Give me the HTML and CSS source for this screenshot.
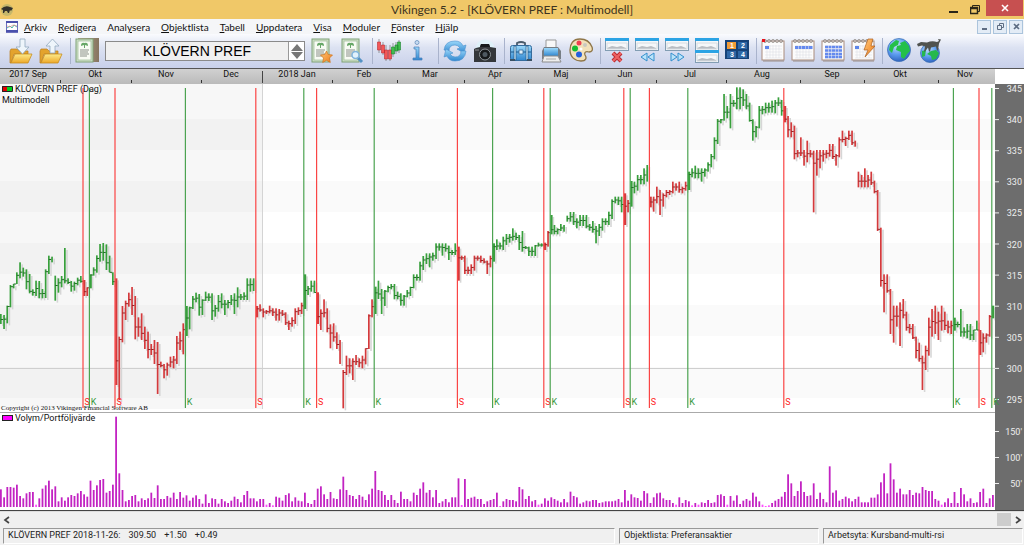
FILE: index.html
```html
<!DOCTYPE html>
<html lang="sv">
<head>
    <meta charset="UTF-8">
    <meta name="viewport" content="width=device-width, initial-scale=1.0">
    <title>Vikingen 5.2 - [KLÖVERN PREF : Multimodell]</title>
    <link rel="stylesheet" href="styles.css">
</head>
<body>
    <svg class="defs" aria-hidden="true">
        <defs>
            <linearGradient id="blue" x1="0" y1="0" x2="0" y2="1"><stop offset="0" stop-color="#9bd8fa"/><stop offset="1" stop-color="#2f86cf"/></linearGradient>
            <linearGradient id="gold" x1="0" y1="0" x2="0" y2="1"><stop offset="0" stop-color="#fdeb8c"/><stop offset="1" stop-color="#eda827"/></linearGradient>
            <linearGradient id="wood" x1="0" y1="0" x2="1" y2="0"><stop offset="0" stop-color="#b9a68e"/><stop offset="1" stop-color="#85745f"/></linearGradient>
            <linearGradient id="orange" x1="0" y1="0" x2="1" y2="1"><stop offset="0" stop-color="#ffc879"/><stop offset="1" stop-color="#ee7a17"/></linearGradient>
            <radialGradient id="sea" cx=".4" cy=".3" r=".8"><stop offset="0" stop-color="#c4e2ff"/><stop offset=".5" stop-color="#5b9cee"/><stop offset="1" stop-color="#2353b4"/></radialGradient>
            <linearGradient id="ruler" x1="0" y1="0" x2="0" y2="1"><stop offset="0" stop-color="#d2d2d2"/><stop offset="1" stop-color="#bababa"/></linearGradient>
            <g id="folder">
                <path d="M1 13l1-2h6l2 2h9v3H5l-3 9H1z" fill="#e3a32d" stroke="#ba7d1e" stroke-width=".7"/>
                <path d="M2 25l4-9h17l-4 9z" fill="url(#gold)" stroke="#c68d22" stroke-width=".8"/>
            </g>
            <g id="sheet">
                <rect x="1" y="1" width="17" height="23" fill="#cfe0c8" stroke="#7fa277"/>
                <rect x="3" y="3" width="13" height="19" fill="#f8fbf4" stroke="#9cba94" stroke-width=".7"/>
                <path d="M6 8q0-4 3.500-3 3.500-1 3.500 3l-3-1v3h-1V7z" fill="#67a767"/>
                <path d="M5 12h9M5 14h8M5 16h9M5 18h7" stroke="#8b918a"/>
            </g>
            <g id="window">
                <rect x=".5" y=".5" width="23" height="12" fill="#f5f7f9" stroke="#829db3"/>
                <rect x="0" y="0" width="24" height="3" fill="#2ba3e4"/>
                <path d="M2 10l5-2 5 1 4-1 5 2v1H2z" fill="#b8bcc2"/>
                <path d="M2 5h20v6H2z" fill="none" stroke="#d7dce1"/>
            </g>
            <g id="calendar">
                <rect x="1" y="3" width="22" height="19" fill="#fcfcfc" stroke="#aa8c7d"/>
                <path d="M2 23h21" stroke="#998b86"/>
                <path d="M4 8h17M4 11h17M4 14h17M4 17h17M4 20h17M6 7v13M9 7v13M12 7v13M15 7v13M18 7v13" stroke="#dedfe5" stroke-width=".6"/>
                <g fill="none" stroke="#8c8580" stroke-width=".8"><circle cx="4" cy="3" r="1.500"/><circle cx="8" cy="3" r="1.500"/><circle cx="12" cy="3" r="1.500"/><circle cx="16" cy="3" r="1.500"/><circle cx="20" cy="3" r="1.500"/></g>
            </g>
        </defs>
    </svg>

    <header class="titlebar">
        <svg class="app-icon" viewBox="0 0 14 14"><circle cx="7" cy="7" r="6" fill="#c6b76a"/><path d="M1 6q4-4 9-2l3 1-2 3-1-1-1 3H8L7 8H5l-1 2H3V7z" fill="#33312b"/></svg>
        <h1>Vikingen 5.2 - [KLÖVERN PREF : Multimodell]</h1>
        <div class="window-buttons">
            <button type="button" aria-label="Minimera"><svg width="9" height="15" viewBox="0 0 9 15"><path d="M0 11h9" stroke="#2b2618" stroke-width="2"/></svg></button>
            <button type="button" aria-label="Återställ"><svg width="10" height="15" viewBox="0 0 10 15"><path d="M2.500 6V4.500h7v6H8" fill="none" stroke="#2b2618"/><path d="M.5 6.500h7v6h-7zM0 7.500h8" fill="none" stroke="#2b2618" stroke-width="1.500"/></svg></button>
            <button type="button" class="close" aria-label="Stäng"><svg width="8" height="8" viewBox="0 0 8 8"><path d="M1 1l6 6M7 1L1 7" stroke="#fff" stroke-width="1.600"/></svg></button>
        </div>
    </header>

    <nav class="menubar">
        <svg class="doc-icon" viewBox="0 0 12 12"><rect x=".5" y=".5" width="11" height="11" fill="#fff" stroke="#6c70bd"/><path d="M0 1h12M0 10h12" stroke="#4a51ac" stroke-width="2"/><path d="M1 7l3-2 2 2 2-3 3 2" fill="none" stroke="#48b7a8"/><path d="M1 5l3 1 3-2 4 1" fill="none" stroke="#e09090" stroke-width=".7"/></svg>
        <a href="#"><u>A</u>rkiv</a>
        <a href="#"><u>R</u>edigera</a>
        <a href="#">Anal<u>y</u>sera</a>
        <a href="#"><u>O</u>bjektlista</a>
        <a href="#"><u>T</u>abell</a>
        <a href="#"><u>U</u>ppdatera</a>
        <a href="#"><u>V</u>isa</a>
        <a href="#"><u>M</u>oduler</a>
        <a href="#"><u>F</u>önster</a>
        <a href="#"><u>H</u>jälp</a>
        <div class="mdi-buttons">
            <button type="button" aria-label="Minimera fönster"><svg viewBox="0 0 11 11"><path d="M3 8h5" stroke="#5d6c82" stroke-width="2"/></svg></button>
            <button type="button" aria-label="Återställ fönster"><svg viewBox="0 0 11 11"><path d="M4.500 4V2.500h4v4H7M2.500 4.500h4v4h-4z" fill="none" stroke="#5d6c82"/></svg></button>
            <button type="button" aria-label="Stäng fönster"><svg viewBox="0 0 11 11"><path d="M3 3l5 5M8 3L3 8" stroke="#5d6c82" stroke-width="1.600"/></svg></button>
        </div>
    </nav>

    <div class="toolbar">
        <button type="button" aria-label="Hämta"><svg viewBox="0 0 24 26"><use href="#folder"/><path d="M11 1h5v8h4l-6.500 7L7 9h4z" fill="#eef5fb" stroke="#93a9bf" stroke-width=".8"/></svg></button>
        <button type="button" aria-label="Spara"><svg viewBox="0 0 24 26"><use href="#folder"/><path d="M11 15h5V8h4l-6.500-7L7 8h4z" fill="#eef5fb" stroke="#93a9bf" stroke-width=".8"/></svg></button>
        <span class="separator"></span>
        <button type="button" aria-label="Objektlista"><svg viewBox="0 0 24 26"><path d="M3 0h21v24H3z" fill="url(#wood)"/><use href="#sheet"/></svg></button>
        <div class="object-picker">
            <input type="text" aria-label="Objekt" value="KLÖVERN PREF">
            <div class="spinner">
                <button type="button" aria-label="Föregående"><svg viewBox="0 0 14 8"><path d="M7 1l6 7H1z" fill="#777"/></svg></button>
                <button type="button" aria-label="Nästa"><svg viewBox="0 0 14 8"><path d="M7 7l6-7H1z" fill="#777"/></svg></button>
            </div>
        </div>
        <button type="button" aria-label="Favoriter"><svg viewBox="0 0 24 26"><use href="#sheet"/><path d="M15.500 13l1.700 3.500 4.300.5-3 3 .8 4.500-3.800-2.200-3.800 2.200.8-4.500-3-3 4.300-.5z" fill="url(#orange)" stroke="#cf761f" stroke-width=".7"/></svg></button>
        <button type="button" aria-label="Sök objekt"><svg viewBox="0 0 24 26"><use href="#sheet"/><path d="M17 20l4 4" stroke="#5492c5" stroke-width="3"/><circle cx="14.500" cy="17" r="3.500" fill="#e1f2fc" stroke="#80b4dc" stroke-width="1.500"/></svg></button>
        <span class="separator"></span>
        <button type="button" aria-label="Diagram"><svg viewBox="0 0 24 26"><path d="M2 1v14M6 4v13M9 7v16M13 7v16M16 5v14M19 4v12M22 2v13" stroke="#777" stroke-width=".7"/><path d="M.5 4h3v8h-3zM4.500 7h3v8h-3zM7.500 12h3v9h-3zM11.500 12h3v9h-3z" fill="#f35757" stroke="#b92c32" stroke-width=".6"/><path d="M14.500 9h3v7h-3zM18 7h3v6h-3zM20.500 4h3v8h-3z" fill="#40bd4c" stroke="#1d8330" stroke-width=".6"/></svg></button>
        <button type="button" aria-label="Information"><svg viewBox="0 0 24 26"><circle cx="10" cy="4.500" r="2" fill="#c8dcf2" stroke="#668fbd" stroke-width=".8"/><path d="M7 9h5v11h3v2H6v-2h3v-9H7z" fill="url(#blue)" stroke="#477bb8" stroke-width=".7"/></svg></button>
        <span class="separator"></span>
        <button type="button" aria-label="Uppdatera"><svg viewBox="0 0 24 26"><path d="M1 12Q2 3 12 3q6 0 8 5l3-1-2 8-7-4 3-1q-2-3-5-3-6 0-6 6z" fill="url(#blue)" stroke="#4b90cf" stroke-width=".6"/><path d="M23 13q-1 10-11 10-6 0-8-5l-3 1 2-8 7 4-3 1q2 3 5 3 6 0 6-6z" fill="url(#blue)" stroke="#4b90cf" stroke-width=".6"/></svg></button>
        <button type="button" aria-label="Ögonblicksbild"><svg viewBox="0 0 24 26"><circle cx="12" cy="11" r="9.500" fill="#dff1f9"/><path d="M1 11l2-1 4-1 1-3h8l1 3 6 1v14H1z" fill="#34373b"/><path d="M8 6h8l1 3H7z" fill="#16191c"/><circle cx="12" cy="16.500" r="5.500" fill="#17191b" stroke="#8d9498"/><circle cx="12" cy="16.500" r="2.500" fill="#4f5961"/><path d="M2 12h4" stroke="#8b8e91"/></svg></button>
        <span class="separator"></span>
        <button type="button" aria-label="Portfölj"><svg viewBox="0 0 24 26"><path d="M8 8V5q4-2 8 0v3" fill="none" stroke="#495a6a" stroke-width="1.800"/><rect x="1.500" y="7.500" width="21" height="15" rx="2" fill="url(#blue)" stroke="#356c9d"/><path d="M2 14h20" stroke="#215a8b"/><path d="M5 8h2v14H5zM17 8h2v14h-2z" fill="#cfe8f6" stroke="#215a8b" stroke-width=".7"/><path d="M10 12h4v4h-4z" fill="#e2f1fa" stroke="#356c9d" stroke-width=".8"/><path d="M1 21h5v2H1zM18 21h5v2h-5z" fill="#395064"/></svg></button>
        <button type="button" aria-label="Skriv ut"><svg viewBox="0 0 24 26"><path d="M7 11V2h10v9" fill="#f8f8f8" stroke="#999"/><path d="M3 13l2-4h14l3 4v8H3z" fill="#777e85"/><path d="M5 10h14v8H5z" fill="url(#blue)"/><path d="M5 18h14l3 6H3z" fill="#ededed" stroke="#8b8b8b"/><path d="M7 21h10" stroke="#aaa"/></svg></button>
        <button type="button" aria-label="Färger"><svg viewBox="0 0 24 26"><path d="M11 1C4 1 1 6 1 12c0 7 5 11 11 11 5 0 6-3 4-6-1-3 1-4 4-3 3 0 4-2 3-5-2-5-6-8-12-8z" fill="#f2e1ba" stroke="#8e7548" stroke-width="1.300"/><circle cx="10" cy="5" r="2.500" fill="#ed4050"/><circle cx="6" cy="10.500" r="3" fill="#14be32"/><circle cx="10" cy="16.500" r="3" fill="#2460dd"/><circle cx="16" cy="7" r="2" fill="#c9c8c0"/><circle cx="12" cy="11" r="1.500" fill="#fff"/></svg></button>
        <span class="separator"></span>
        <button type="button" aria-label="Stäng diagram"><svg viewBox="0 0 24 26"><use href="#window"/><path d="M8 15l8 8M16 15l-8 8" stroke="#b8262b" stroke-width="4"/><path d="M8 15l8 8M16 15l-8 8" stroke="#ed6262" stroke-width="2.400"/></svg></button>
        <button type="button" aria-label="Bakåt"><svg viewBox="0 0 24 26"><use href="#window"/><path d="M12 15v8l-6-4zM19 15v8l-6-4z" fill="#b9e4fa" stroke="#338fcd"/></svg></button>
        <button type="button" aria-label="Framåt"><svg viewBox="0 0 24 26"><use href="#window"/><path d="M6 15v8l6-4zM13 15v8l6-4z" fill="#b9e4fa" stroke="#338fcd"/></svg></button>
        <button type="button" aria-label="Två diagram"><svg viewBox="0 0 24 26"><use href="#window"/><use href="#window" y="12"/></svg></button>
        <button type="button" aria-label="Fyra diagram"><svg viewBox="0 0 24 26"><rect y="2" width="24" height="19" fill="#164278"/><path d="M2 4h9v7H2z" fill="#f19b37"/><path d="M13 4h9v7h-9zM2 13h9v7H2zM13 13h9v7h-9z" fill="#2e67a6"/><g class="tile-number"><text x="7" y="10">1</text><text x="18" y="10">2</text><text x="7" y="19">3</text><text x="18" y="19">4</text></g></svg></button>
        <span class="separator"></span>
        <button type="button" aria-label="Dag"><svg viewBox="0 0 24 26"><use href="#calendar"/><path d="M1 1h3v3H1z" fill="#e9141b"/><path d="M4 8h4v3H4z" fill="#5d85e8"/></svg></button>
        <button type="button" aria-label="Vecka"><svg viewBox="0 0 24 26"><use href="#calendar"/><path d="M4 9.500h18" stroke="#6489ee" stroke-width="3" stroke-dasharray="3 .5"/></svg></button>
        <button type="button" aria-label="Månad"><svg viewBox="0 0 24 26"><use href="#calendar"/><path d="M4 9h17M4 12.500h17M4 16h17M4 19h17" stroke="#6489ee" stroke-width="2.500" stroke-dasharray="3 .5"/></svg></button>
        <button type="button" aria-label="Intradag"><svg viewBox="0 0 24 26"><use href="#calendar"/><path d="M4 8h4v3H4z" fill="#5d85e8"/><path d="M17 1h5l-2 7h4L14 19l3-7h-4z" fill="url(#orange)" stroke="#ad6020" stroke-width=".7"/></svg></button>
        <span class="separator"></span>
        <button type="button" aria-label="Internet"><svg viewBox="2 0 24 26"><circle cx="14" cy="12" r="11.500" fill="url(#sea)" stroke="#376cb0" stroke-width=".7"/><path d="M5 7l6-5 3 1-1 4-4 2-2 6-3-3zM15 5l5-2 4 5 1 5-3 3-3 5-3-2v-5l-5-2 1-4 4-1z" fill="#24c04a"/></svg></button>
        <button type="button" aria-label="Börsen"><svg viewBox="0 0 24 26"><circle cx="13" cy="15" r="9.500" fill="url(#sea)" stroke="#376cb0" stroke-width=".7"/><path d="M14 13l5-1 3 3-3 6-4 1-1-4-4-2zM5 13l4-1-1 6-3 1z" fill="#26b84d"/><path d="M0 6l4-2 6 .5q5-2 10-.5l2-1-1-2 3 .5-2 4-1 7h-1l-1-4-5 1-1 4h-1l-1-4-3 4h-1l1-5-3-1-4 1z" fill="#505350"/></svg></button>
    </div>

    <main class="chart">
        <svg id="timeline" viewBox="0 0 1024 16"></svg>
        <svg id="price" viewBox="0 0 1024 328"></svg>
        <svg id="volume" viewBox="0 0 1024 100"></svg>
    </main>

    <div class="scrollbar">
        <button type="button" aria-label="Rulla vänster"><svg viewBox="0 0 7 8"><path d="M6 1L2 4l4 3" fill="none" stroke="#444" stroke-width="1.700"/></svg></button>
        <div class="track"><span class="thumb"></span></div>
        <button type="button" aria-label="Rulla höger"><svg viewBox="0 0 7 8"><path d="M1 1l4 3-4 3" fill="none" stroke="#444" stroke-width="1.700"/></svg></button>
    </div>

    <footer class="statusbar">
        <div class="pane quote"><span>KLÖVERN PREF 2018-11-26:</span><span>309.50</span><span>+1.50</span><span>+0.49</span></div>
        <div class="pane">Objektlista: Preferansaktier</div>
        <div class="pane">Arbetsyta: Kursband-multi-rsi</div>
    </footer>
    <script src="chart.js"></script>
</body>
</html>
```

FILE: styles.css
```css
* {
    box-sizing: border-box;
}
body {
    margin: 0;
    font-family: Roboto, "Liberation Sans", sans-serif;
    font-size: 9px;
    color: #222;
    background-color: #f0f0f0;
}
button {
    display: flex;
    align-items: center;
    justify-content: center;
    padding: 0;
    border: 0;
    background: none;
}
svg {
    display: block;
}
.defs {
    position: absolute;
    width: 0;
    height: 0;
}

.titlebar {
    display: grid;
    grid-template-columns: 1fr auto 1fr;
    align-items: center;
    height: 19px;
    background-color: #f0c868;
}
.titlebar h1 {
    margin: 0;
    font: 12px/19px Lato, sans-serif;
    color: #3d3420;
}
.app-icon {
    width: 14px;
    height: 14px;
}
.window-buttons {
    display: flex;
    align-self: start;
    justify-content: flex-end;
    gap: 12px;
    padding-right: 1px;
}
.window-buttons .close {
    width: 37px;
    height: 16px;
    margin-left: -6px;
    background-color: #c75050;
}

.menubar {
    display: flex;
    align-items: center;
    gap: 11px;
    height: 15px;
    padding-left: 6px;
    background-color: #f5f6f8;
    font: 10px/14px Lato, sans-serif;
}
.menubar a {
    color: #111;
    text-decoration: none;
}
.doc-icon {
    width: 12px;
    height: 12px;
    margin-right: -5px;
}
.mdi-buttons {
    display: flex;
    gap: 2px;
    margin-left: auto;
    padding-right: 1px;
}
.mdi-buttons button {
    width: 14px;
    height: 14px;
    border: 1px solid #abc4dc;
    background-color: #e3ecf6;
}
.mdi-buttons svg {
    width: 11px;
}

.toolbar {
    display: flex;
    align-items: center;
    gap: 6px;
    height: 34px;
    padding-left: 9px;
    background: linear-gradient(#fafbfe, #dce2f2 40%, #c8d0ea);
}
.toolbar > button {
    width: 24px;
    height: 26px;
}
.toolbar > button svg {
    width: 24px;
    height: 26px;
}
.separator {
    width: 1px;
    height: 26px;
    margin: 0 -2px 0 1px;
    background-color: #a9b3cc;
}
.tile-number {
    fill: #fff;
    font-size: 7px;
    font-weight: bold;
    text-anchor: middle;
}
.object-picker {
    display: flex;
    width: 200px;
    height: 20px;
    border: 1px solid #8a8a8a;
    background-color: #f0f0f0;
}
.object-picker input {
    flex: 1;
    min-width: 0;
    padding: 0;
    border: 0;
    background: none;
    font: 14px "Liberation Sans", sans-serif;
    text-align: center;
    color: #000;
}
.spinner {
    display: grid;
    width: 16px;
    border-left: 1px solid #999;
    background-color: #fff;
}
.spinner svg {
    width: 14px;
}

.chart svg {
    width: 100%;
    height: auto;
}
.chart text {
    fill: #111;
    font-size: 9px;
}
.chart .scale {
    fill: #eee;
    text-anchor: end;
}
.chart .month {
    text-anchor: middle;
}
.chart .copyright {
    font: 7px "Liberation Serif", serif;
}
.chart .sell {
    fill: #f22;
}
.chart .buy {
    fill: #38983b;
}

.scrollbar {
    display: flex;
    height: 15px;
    background-color: #f0f0f0;
}
.scrollbar button {
    width: 12px;
}
.scrollbar svg {
    width: 7px;
}
.track {
    display: flex;
    flex: 1;
    justify-content: flex-end;
    padding: 1px 0;
}
.thumb {
    width: 14px;
    margin-right: 1px;
    background-color: #cdcdcd;
}

.statusbar {
    display: grid;
    grid-template-columns: 612fr 200fr 200fr;
    gap: 4px;
    padding: 1px 1px 0 3px;
}
.pane {
    height: 16px;
    padding-left: 4px;
    border: 1px solid #fff;
    border-top-color: #999;
    border-left-color: #999;
    line-height: 13px;
    white-space: nowrap;
}
.quote span {
    margin-right: 8px;
}
```

FILE: chart.js
```javascript
// [high, low] pairs, in thirds of a unit below the top of each run
const runs = [
    { top: 146, bars: [
        [252,282],[255,297],[227,280],[165,232],[162,175],[127,162],[97,145],[113,140],[118,178],[132,190],
        [178,197],[152,198],[153,205],[177,205],[118,204],[77,132],[80,97],[137,212],[145,188],[138,172],
        [54,160],[145,162],[153,185],[155,182],[143,166],[138,158],[150,198],[172,198],[133,175],[112,137],
        [76,128],[42,95],[39,92],[43,120],[77,127],[127,165],[145,465],[320,510],[228,337],[212,270],
        [188,230],[171,255],[198,328],[262,320],[250,330],[290,357],[305,385],[342,375],[330,402],[336,492],
        [395,412],[402,445],[398,437],[380,412],[378,415],[318,402],[305,360],[280,373],[228,318],[230,298],
        [198,237],[188,217],[192,257],[208,255],[185,213],[190,213],[190,270],[225,260],[195,245],[190,235],
        [210,255],[210,235],[195,225],[190,252],[172,232],[192,210],[187,210],[145,210],[145,185],[145,183],
        [228,262],[223,245],[235,262],[240,252],[227,250],[235,258],[235,272],[237,272],[240,258],[247,285],
        [272,300],[262,290],[235,282],[232,255],[218,252],[133,237],[168,195],[152,185],[152,188],[187,282],
        [238,300],[208,262],[235,307],[283,355],[280,335],[307,357],[330,402],[420,535],[377,435],[385,430],
        [385,450],[375,405],[385,412],[377,415],[355,403],[253,357],[208,262],[170,252],[152,207],[177,252],
        [180,228],[167,187],[162,178],[162,208],[185,208],[190,227],[195,227],[180,202],[170,198],[133,175],
        [133,152],[95,152],[78,120],[70,102],[70,112],[68,92],[40,87],[40,62],[40,77],[40,65],
        [47,90],[60,75],[40,75],[50,152],[77,90],[77,132],[110,132],[103,132],[77,122],[77,92],
        [77,98],[85,100],[92,132],[77,112]
    ] },
    { top: 66, bars: [
        [280,335],[268,300],[278,298],[260,300],[252,285],[252,278],[235,272],[248,270],[255,300],[243,305],
        [288,297],[290,318],[290,318],[285,318],[278,290],[280,290],[278,300],[243,290],[195,253],[225,253],
        [235,253],[222,243],[225,245],[197,215],[186,215],[186,225],[205,235],[195,228],[195,228],[195,235],
        [222,242],[213,248],[228,280],[222,258],[205,242],[205,225],[185,225],[148,207],[140,160],[140,165],
        [140,187],[130,225],[150,187],[93,170],[95,130],[75,122],[75,103],[55,103],[45,95],[140,172],
        [140,185],[110,160],[120,195],[130,170],[120,142],[120,135],[95,130],[100,122],[95,128],[110,130],
        [95,122]
    ] },
    { top: -4, bars: [
        [275,330],[265,292],[257,295],[265,295],[265,305],[265,290],[247,275],[222,262],[172,238],[117,192],
        [117,130],[42,122],[78,115],[42,145],[60,80],[22,88],[22,88],[28,78],[42,88],[68,125],
        [118,182],[138,172],[78,145],[78,103],[68,100],[68,98],[62,98],[60,100],[52,78],[60,107],
        [78,127],[108,172],[127,172],[137,238],[210,232],[172,228],[210,257],[182,247],[210,232],[212,397],
        [210,287],[210,265],[210,245],[210,235],[192,230],[192,237],[222,257],[172,232],[152,187],[170,198],
        [152,180],[152,195],[182,200]
    ] },
    { top: 36, bars: [
        [155,202],[165,202],[145,202],[165,202],[155,195],[182,220],[210,333],[323,500],[463,577],[463,518],
        [507,642],[557,668],[557,620],[547,678],[537,595],[575,632],[612,640],[612,657],[650,715],[668,725],
        [707,810],[677,750],[593,707],[567,650],[557,642],[575,660],[557,632],[575,630],[602,640],[602,642],
        [593,632],[605,622],[567,650],[622,650],[612,655],[612,660],[630,660],[602,630],[630,705],[640,697],
        [640,668],[585,650],[557,595]
    ] }
];

// bar number where the model turns: S = sell, K = buy
const signals = [
    [26,'S'],[28,'K'],[36,'S'],[58,'K'],[80,'S'],[95,'K'],[99,'S'],[117,'K'],[143,'S'],[154,'K'],
    [170,'S'],[172,'K'],[195,'S'],[197,'K'],[203,'S'],[215,'K'],[245,'S'],[298,'K'],[306,'S'],[310,'K']
];

const volumes = [
    53,29,60,60,58,67,33,26,41,45,45,7,26,55,65,79,53,62,17,29,19,29,36,33,41,48,38,31,79,51,
    65,81,84,43,48,67,271,101,51,17,21,33,36,17,26,21,26,43,27,65,24,24,33,28,43,24,45,28,35,19,
    28,35,24,10,38,12,26,24,10,24,17,12,19,31,24,14,36,48,26,26,17,24,24,7,12,5,31,28,19,36,
    41,17,29,19,17,43,12,9,21,55,62,38,24,45,26,24,53,91,51,36,33,24,36,31,21,38,55,108,51,48,
    36,21,36,21,12,46,24,24,17,43,36,55,74,43,51,29,51,12,17,24,14,29,29,86,6,84,24,28,31,24,
    24,9,17,21,24,43,3,17,24,21,21,17,60,53,24,33,17,21,7,10,26,19,29,24,19,14,24,14,46,33,
    29,10,14,19,17,21,21,12,14,17,17,17,19,24,14,51,19,38,29,27,19,48,41,12,29,41,43,26,21,21,
    12,7,29,12,21,17,5,12,7,14,12,21,12,14,36,38,33,7,33,19,35,9,19,24,19,43,31,17,7,3,
    5,12,19,24,31,45,98,71,33,48,77,45,33,35,71,24,43,24,14,122,43,50,19,24,31,26,17,24,31,14,
    14,14,28,28,38,74,101,41,131,83,43,55,38,38,51,36,43,41,60,51,48,48,24,19,7,14,26,12,45,12,
    57,38,17,26,12,14,45,55,12,26,36
];

const months = [
    ['2017 Sep',28],['Okt',95],['Nov',166],['Dec',231],['2018 Jan',297],['Feb',364],['Mar',430],['Apr',495],
    ['Maj',561],['Jun',625],['Jul',690],['Aug',762],['Sep',832],['Okt',900],['Nov',965]
];
const monthTicks = [60,131,201,332,397,464,528,595,656,726,800,864,938];

const plotWidth = 995;
const barX = i => 0.8 + i * 3.2;
const rect = (x, y, w, h, fill) => `<rect x="${x}" y="${y}" width="${w}" height="${h}" fill="${fill}"/>`;
const text = (x, y, cls, str) => `<text x="${x}" y="${y}" class="${cls}">${str}</text>`;

function drawTimeline() {
    let out = rect(0, 0, plotWidth, 16, 'url(#ruler)') + rect(0, 0, 1024, 1, '#555') + rect(plotWidth, 1, 29, 15, '#fff');
    months.forEach(([name, x]) => out += text(x, 9, 'month', name));
    monthTicks.forEach(x => out += rect(x, 12, 1, 3, '#333'));
    out += rect(262, 3, 1, 12, '#444');
    document.getElementById('timeline').innerHTML = out;
}

function drawPrice() {
    const bars = runs.flatMap(run => run.bars.map(([h, l]) => [run.top + h / 3, run.top + l / 3]));
    let out = rect(0, 0, plotWidth, 328, '#fff');
    for (let y = 35; y < 328; y += 62) {
        out += rect(0, y, plotWidth, 31, '#fafafa');
    }
    out += rect(0, 0, 262, 325, 'rgba(0,0,0,0.03)') + rect(262, 0, 1, 325, '#d4d4d4');
    out += rect(0, 284, plotWidth, 1, '#cfcfcf');

    let side = 'K';
    let shadows = '';
    let sticks = '';
    bars.forEach(([high, low], i) => {
        const turn = signals.find(s => s[0] === i);
        if (turn) side = turn[1];
        const x = barX(i);
        const color = side === 'K' ? '#38a03c' : '#d43a3c';
        const dark = side === 'K' ? '#256f29' : '#982426';
        shadows += rect(x + 1.4, high + 2, 1.6, low - high, '#d6d6d6');
        sticks += rect(x - 0.8, high, turn ? 2.2 : 1.7, low - high, color);
        const next = bars[i + 1];
        if (next) {
            const close = (Math.max(high, next[0]) + Math.min(low, next[1])) / 2;
            if (close >= high && close <= low) sticks += rect(x, close - 0.5, 2.6, 1, dark);
        }
    });
    out += shadows + sticks;

    out += rect(plotWidth, 0, 29, 328, '#6d6d6d');
    for (let p = 345; p >= 295; p -= 5) {
        const y = 4 + (345 - p) * 6.22;
        out += rect(plotWidth, y, 4, 1, '#eee') + text(1022, y + 4, 'scale', p);
    }

    signals.forEach(([i, kind]) => {
        const x = barX(i) - 1.6;
        out += rect(x, 4, 1.2, 320, kind === 'K' ? '#4ca351' : '#fa4545');
        out += text(x + 2, 321, kind === 'K' ? 'buy' : 'sell', kind);
    });

    out += rect(2, 2, 5, 6, '#e00000') + rect(7, 2, 5, 6, '#00d020') + '<path d="M2.500 2.500h10v5h-10z" fill="none" stroke="#222"/>';
    out += text(15, 8, 'legend', 'KLÖVERN PREF (Dag)') + text(2, 19, 'legend', 'Multimodell');
    out += text(1, 326, 'copyright', 'Copyright (c) 2013 Vikingen Financial Software AB');
    document.getElementById('price').innerHTML = out;
}

function drawVolume() {
    let out = rect(0, 0, plotWidth, 98, '#fff') + rect(0, 0, plotWidth, 1, '#aaa');
    volumes.forEach((v, i) => {
        out += rect(barX(i) - 0.8, 95 - v / 3, 1.8, v / 3, v > 7 ? '#c223c2' : '#ff4dff');
    });
    out += '<rect x="2.500" y="3.500" width="10" height="5" fill="#f0f" stroke="#222"/>' + text(15, 9, 'legend', 'Volym/Portföljvärde');
    out += rect(plotWidth, 0, 29, 98, '#6d6d6d');
    [[19, "150'"], [45, "100'"], [71, "50'"]].forEach(([y, label]) => {
        out += rect(plotWidth, y, 4, 1, '#eee') + text(1022, y + 4, 'scale', label);
    });
    out += rect(0, 98, 1024, 1, '#444') + rect(0, 99, 1024, 1, '#ddd');
    document.getElementById('volume').innerHTML = out;
}

drawTimeline();
drawPrice();
drawVolume();
```
